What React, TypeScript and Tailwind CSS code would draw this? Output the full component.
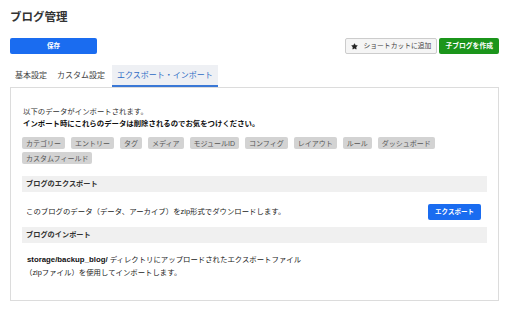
import { Star } from 'lucide-react';

const tags = [
  'カテゴリー',
  'エントリー',
  'タグ',
  'メディア',
  'モジュールID',
  'コンフィグ',
  'レイアウト',
  'ルール',
  'ダッシュボード',
  'カスタムフィールド',
];

const font = { fontFamily: '"Liberation Sans", "Noto Sans CJK JP", sans-serif' };

export default function App() {
  return (
    <div className="w-[510px] h-[312px] bg-white text-[#333] px-[10px] pt-[9px]" style={font}>
      {/* Title */}
      <h1 className="text-[11.5px] leading-[16px] font-bold text-[#333]">ブログ管理</h1>

      {/* Actions */}
      <div className="mt-[13px] flex items-center justify-between">
        <button className="w-[87px] h-[16px] rounded-[2px] bg-[#1a6cf0] text-white text-[6.5px] leading-none font-bold">
          保存
        </button>
        <div className="flex items-center gap-[2px] pr-px">
          <button className="h-[16px] px-[5px] flex items-center gap-[5px] rounded-[2px] border border-[#ccc] bg-[#f5f5f5] text-[#444] text-[6.8px] leading-none">
            <Star size={7} fill="#222" stroke="#222" strokeWidth={1} />
            ショートカットに追加
          </button>
          <button className="h-[16px] px-[6px] rounded-[2px] bg-[#1b951b] text-white text-[6.8px] leading-none font-bold">
            子ブログを作成
          </button>
        </div>
      </div>

      {/* Tabs */}
      <div className="mt-[11px] flex items-end h-[22px] text-[8px] leading-none">
        <div className="px-[5px] h-full flex items-center text-[#444]">基本設定</div>
        <div className="px-[5px] h-full flex items-center text-[#444]">カスタム設定</div>
        <div className="ml-[2px] px-[5px] h-full flex items-center bg-[#eef0f4] text-[#2d6bc4] border-b-2 border-[#3a78d6] pt-[2px]">
          エクスポート・インポート
        </div>
      </div>

      {/* Panel */}
      <div className="w-[489px] h-[214px] border border-[#dcdcdc] px-[11px] pt-[18px]">
        <p className="pl-px text-[7.4px] leading-[12px] text-[#333]">以下のデータがインポートされます。</p>
        <p className="pl-px text-[7.4px] leading-[12px] font-bold text-[#111]">
          インポート時にこれらのデータは削除されるのでお気をつけください。
        </p>

        <div className="mt-[7px] flex flex-wrap gap-x-[6px] gap-y-[3px] w-[440px]">
          {tags.map((t) => (
            <span
              key={t}
              className="h-[12px] px-[4px] flex items-center rounded-[2px] bg-[#d3d3d3] text-[#555] text-[7px] leading-none"
            >
              {t}
            </span>
          ))}
        </div>

        {/* Export */}
        <div className="mt-[12px] h-[16px] flex items-center bg-[#f0f0f0] px-[4px] text-[7.2px] font-bold text-[#333]">
          ブログのエクスポート
        </div>
        <div className="mt-[12px] flex items-center justify-between pl-[4px] pr-[6px]">
          <p className="text-[7.4px] leading-none text-[#222]">
            このブログのデータ（データ、アーカイブ）をzip形式でダウンロードします。
          </p>
          <button className="w-[53px] h-[16px] rounded-[2px] bg-[#1a6cf0] text-white text-[6.5px] leading-none font-bold">
            エクスポート
          </button>
        </div>

        {/* Import */}
        <div className="mt-[7px] h-[16px] flex items-center bg-[#f0f0f0] px-[4px] text-[7.2px] font-bold text-[#333]">
          ブログのインポート
        </div>
        <div className="mt-[10px] pl-[3px] text-[7.4px] leading-[13px] text-[#222]">
          <p className="pl-[2px]">
            <b className="text-[7.8px] text-[#111]">storage/backup_blog/</b> ディレクトリにアップロードされたエクスポートファイル
          </p>
          <p>（zipファイル）を使用してインポートします。</p>
        </div>
      </div>
    </div>
  );
}
